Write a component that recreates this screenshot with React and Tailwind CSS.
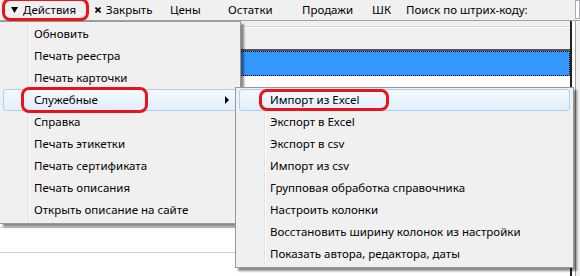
const mainItems = [
  'Обновить',
  'Печать реестра',
  'Печать карточки',
  'Служебные',
  'Справка',
  'Печать этикетки',
  'Печать сертификата',
  'Печать описания',
  'Открыть описание на сайте',
];

const subItems = [
  'Импорт из Excel',
  'Экспорт в Excel',
  'Экспорт в csv',
  'Импорт из csv',
  'Групповая обработка справочника',
  'Настроить колонки',
  'Восстановить ширину колонок из настройки',
  'Показать автора, редактора, даты',
];

const font = { fontFamily: '"Noto Sans", "Open Sans", sans-serif' };

function RedMark({ className }) {
  return (
    <div
      className={'absolute pointer-events-none border-[3px] border-[#e8141c] rounded-[8px] ' + className}
    />
  );
}

function MenuItem({ label, active, arrow, mark }) {
  return (
    <div className="relative h-[22px] flex items-center">
      {active && (
        <div className="absolute inset-y-0 left-[3px] right-[3px] rounded-[3px] border border-[#a9d0f5] bg-gradient-to-b from-[#f4f9fe] to-[#e2eefb]" />
      )}
      <span className="relative pl-[34px] text-[11.5px] text-black whitespace-nowrap">{label}</span>
      {arrow && (
        <svg className="absolute right-[10px] top-[7px]" width="5" height="8" viewBox="0 0 5 8">
          <path d="M0 0 L4 4 L0 8 Z" fill="#000" />
        </svg>
      )}
      {mark && <RedMark className={mark} />}
    </div>
  );
}

export default function App() {
  return (
    <div className="relative w-[580px] h-[276px] overflow-hidden bg-white" style={font}>
      {/* toolbar */}
      <div className="relative h-[21px] bg-[#f0f0f0] border-b border-[#a0a0a0] flex items-center text-[11.5px] text-black">
        <div className="w-[93px] pl-[11px] flex items-center gap-[5px]">
          <svg width="7" height="6" viewBox="0 0 7 6">
            <path d="M0 0 H7 L3.5 6 Z" fill="#000" />
          </svg>
          <span>Действия</span>
        </div>
        <div className="w-[77px] pl-[2px] flex items-center gap-[5px]">
          <svg width="6" height="6" viewBox="0 0 6 6">
            <path d="M0.5 0.5 L5.5 5.5 M5.5 0.5 L0.5 5.5" stroke="#000" strokeWidth="1.6" />
          </svg>
          <span>Закрыть</span>
        </div>
        <span className="w-[58px]">Цены</span>
        <span className="w-[74px]">Остатки</span>
        <span className="w-[70px]">Продажи</span>
        <span className="w-[34px]">ШК</span>
        <span className="w-[169px]">Поиск по штрих-коду:</span>
        <div className="h-[19px] flex-1 self-start bg-white border border-[#abadb3]" />
        <RedMark className="left-[2px] top-[-2px] w-[87px] h-[23px]" />
      </div>

      {/* grid */}
      <div className="flex h-[255px]">
        <div className="w-[572px] flex flex-col bg-white border-r-2 border-[#222]">
          <div className="h-[6px] bg-[#f0f0f0] border-b border-[#d5d5d5]" />
          <div className="h-[24px] bg-[#f0f0f0] border-t border-white border-b-2 border-b-[#555]" />
          <div className="h-[25px] bg-[#3399ff] border border-dotted border-black" />
          <div className="h-[27px] border-b border-[#d0d0d0]" />
          <div className="h-[25px] border-b border-[#d0d0d0]" />
          <div className="h-[25px] border-b border-[#d0d0d0]" />
          <div className="h-[25px] border-b border-[#d0d0d0]" />
          <div className="h-[25px] border-b border-[#d0d0d0]" />
          <div className="h-[25px] border-b border-[#d0d0d0]" />
          <div className="h-[25px] border-b border-[#d0d0d0]" />
        </div>
        <div className="flex-1 bg-[#f0f0f0] border-l border-[#a0a0a0] ml-[3px]" />
      </div>

      {/* main dropdown */}
      <div className="absolute left-0 top-[21px] w-[241px] h-[203px] bg-[#f0f0f0] border border-[#979797] border-l-0 py-[1px] shadow-[3px_3px_2px_rgba(0,0,0,0.45)]">
        <div className="absolute left-[28px] top-[1px] bottom-[1px] w-[2px] border-l border-[#e2e3e3] border-r border-r-white" />
        {mainItems.map((it) => (
          <MenuItem
            key={it}
            label={it}
            active={it === 'Служебные'}
            arrow={it === 'Служебные'}
            mark={it === 'Служебные' ? 'left-[21px] top-[-2px] w-[127px] h-[26px]' : ''}
          />
        ))}
      </div>

      {/* submenu */}
      <div className="absolute left-[235px] top-[87px] w-[339px] h-[181px] bg-[#f0f0f0] border border-[#979797] py-[1px] shadow-[3px_3px_2px_rgba(0,0,0,0.45)]">
        <div className="absolute left-[28px] top-[1px] bottom-[1px] w-[2px] border-l border-[#e2e3e3] border-r border-r-white" />
        {subItems.map((it) => (
          <MenuItem
            key={it}
            label={it}
            active={it === 'Импорт из Excel'}
            mark={it === 'Импорт из Excel' ? 'left-[23px] top-[0px] w-[130px] h-[22px]' : ''}
          />
        ))}
      </div>
    </div>
  );
}
